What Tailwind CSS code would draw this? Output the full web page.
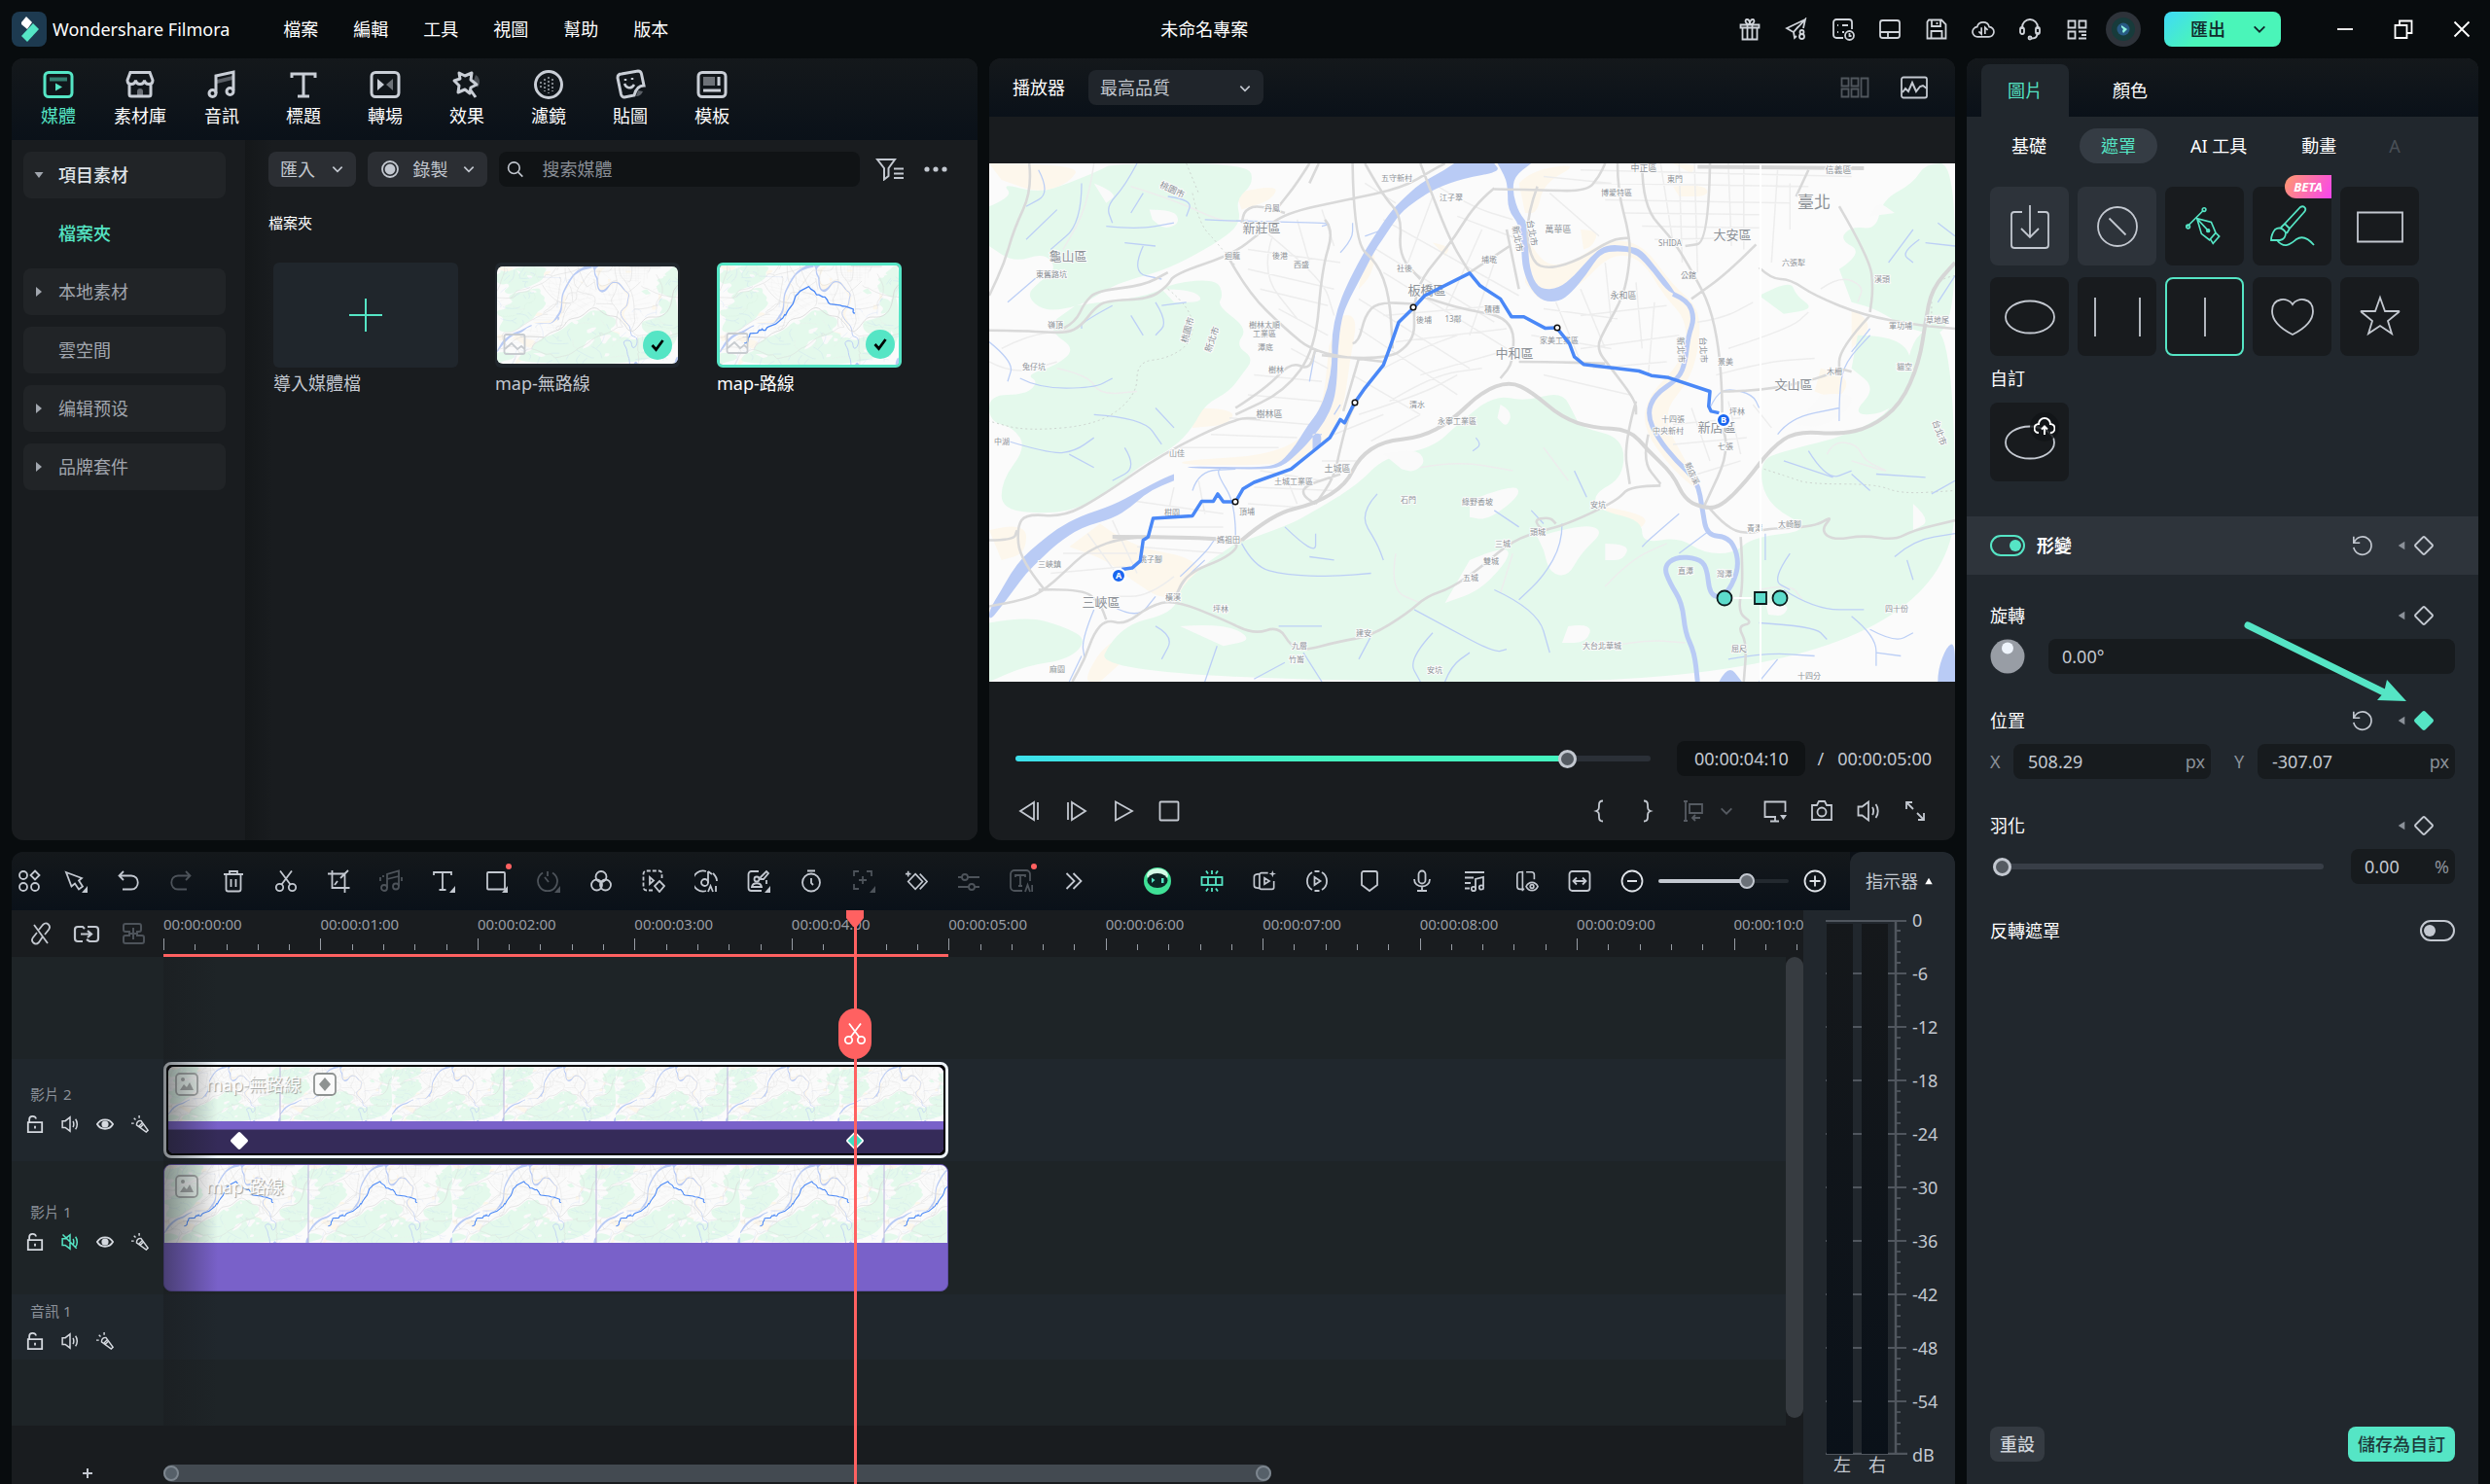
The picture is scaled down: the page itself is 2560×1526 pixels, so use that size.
<!DOCTYPE html>
<html lang="zh-Hant">
<head>
    <meta charset="UTF-8">
    <meta name="viewport" content="width=device-width, initial-scale=1.0">
    <title>Wondershare Filmora</title>
    <script src="https://cdn.jsdelivr.net/npm/@tailwindcss/browser@4"></script>
</head>
<body class="flex h-screen flex-col overflow-hidden bg-[#080c0e] fill-none stroke-current stroke-[1.8] font-['Noto_Sans','Noto_Sans_CJK_TC',sans-serif] text-lg/6 text-[#c3c8d0]">

    <!-- Icon sprite -->
    <svg class="absolute size-0" aria-hidden="true">
        <symbol id="gift" viewBox="0 0 24 24"><path d="M2.500 7.500h19v3h-19zM4.500 10.500v12h15v-12M9.500 7.500v15M14.500 7.500v15M12 7c-5 0-5.500-5-3-5s3 3 3 5c0-2 .5-5 3-5s2 5-3 5"/></symbol>
        <symbol id="send" viewBox="0 0 24 24"><path d="M12 19l-2 2-1-6L21 2l-2 9M21 2L2 11l5 3 2 1M9 15l5-6"/><circle cx="17.500" cy="15" r="2"/><circle cx="17.500" cy="19.500" r="2.500"/></symbol>
        <symbol id="tasks" viewBox="0 0 24 24"><path d="M12 21H5a3 3 0 0 1-3-3V5a3 3 0 0 1 3-3h13a3 3 0 0 1 3 3v7M6 8h1M6 15h1M11 8h6M11 15h2"/><circle cx="18.500" cy="18.500" r="4.500"/><path d="M18.500 16v3h2"/></symbol>
        <symbol id="layout" viewBox="0 0 24 24"><rect x="2" y="3" width="20" height="18" rx="2.500"/><path d="M2 15h20M10 15v6"/></symbol>
        <symbol id="save" viewBox="0 0 24 24"><path d="M4 2.500h13L21.500 7v14.500h-19v-17zM7 3v6h9V3M12.500 5v2M6.500 21.500V14h11v7.500"/></symbol>
        <symbol id="cloud" viewBox="0 0 26 24"><path d="M7 20.500a5.500 5.500 0 0 1-.8-11 7 7 0 0 1 13.500 0 5.500 5.500 0 0 1-.7 11zM11 10v7.500L8 14.500M15 17.500V10l3 3"/></symbol>
        <symbol id="headset" viewBox="0 0 24 24"><path d="M4 12V10a8 8 0 0 1 16 0v2M20 15c0 5-3 6.500-6 6.500"/><rect x="2" y="10" width="4" height="7" rx="2"/><rect x="18" y="10" width="4" height="7" rx="2"/><circle cx="12" cy="21" r="1.500"/></symbol>
        <symbol id="qr" viewBox="0 0 24 24"><path d="M3.500 3.500h7v7h-7zM14.500 3.500h7v7h-7zM3.500 14.500h7v7h-7zM14 14.500h8M17 18h5M14 21.500h8"/></symbol>
        <symbol id="minus" viewBox="0 0 24 24"><path d="M4 12h16"/></symbol>
        <symbol id="restore" viewBox="0 0 24 24"><path d="M3.500 8h12v13h-12zM8 8V3.500h12.500V16h-5"/></symbol>
        <symbol id="close" viewBox="0 0 24 24"><path d="M4.500 4.500l15 15M19.500 4.500l-15 15"/></symbol>
        <symbol id="chev" viewBox="0 0 12 12"><path d="M2 4l4 4 4-4" stroke-width="1.400"/></symbol>
        <symbol id="tri-l" viewBox="0 0 12 12"><path d="M10 1v10L2 6z" fill="currentColor" stroke="none"/></symbol>
        <symbol id="tri-r" viewBox="0 0 12 12"><path d="M3 1v10l6-5z" fill="currentColor" stroke="none"/></symbol>
        <symbol id="tri-d" viewBox="0 0 12 12"><path d="M1.500 3h9L6 9z" fill="currentColor" stroke="none"/></symbol>
        <symbol id="tri-u" viewBox="0 0 12 12"><path d="M1.500 10h9L6 2z" fill="currentColor" stroke="none"/></symbol>

        <!-- Library tabs -->
        <symbol id="n-media" viewBox="0 0 32 32"><rect x="2" y="3.500" width="28" height="25" rx="4"/><path d="M7 8.500h18v4H7z" fill="currentColor" fill-opacity=".5" stroke="none"/><path d="M13 14.500v8l7-4z" fill="currentColor" stroke="none"/></symbol>
        <symbol id="n-stock" viewBox="0 0 32 32"><path d="M5 15v11a2 2 0 0 0 2 2h18a2 2 0 0 0 2-2V15M6 3.500h20l3 8c0 3-2 4-4 4s-4-1-4.500-4c-.5 3-2.500 4-4.500 4s-4-1-4.500-4c-.5 3-2.500 4-4.500 4s-4-1-4-4z"/><path d="M13 27v-4a3 3 0 0 1 6 0v4z" fill="currentColor" fill-opacity=".5" stroke="none"/></symbol>
        <symbol id="n-audio" viewBox="0 0 32 32"><path d="M10 25V7l18-4v19"/><path d="M11 11l16-4v4l-16 4z" fill="currentColor" fill-opacity=".4" stroke="none"/><circle cx="6.500" cy="25" r="3.500"/><circle cx="24.500" cy="23" r="3.500"/></symbol>
        <symbol id="n-title" viewBox="0 0 32 32"><path d="M4 9V5h24v4M16 5v23M10 28h12"/></symbol>
        <symbol id="n-trans" viewBox="0 0 32 32"><rect x="2" y="3.500" width="28" height="25" rx="4"/><path d="M8 10v12l7-6z" fill="currentColor" stroke="none"/><path d="M24 10v12l-7-6z" fill="currentColor" fill-opacity=".5" stroke="none"/></symbol>
        <symbol id="n-fx" viewBox="0 0 32 32"><path d="M25 6c5 3 5 9 2 13l-4-7z" fill="currentColor" fill-opacity=".3" stroke="none"/><path d="M8 4l6 3 7-3-1 7 6 5-6 3-1 6-5-4-7 3 1-7-5-5 6-2zM20 22l5 7" stroke-linejoin="round"/></symbol>
        <symbol id="n-filter" viewBox="0 0 32 32"><circle cx="16" cy="16" r="13.500"/><path d="M16 8v17M12 10v13M20 10v13M8 13v6" stroke-width="2" stroke-dasharray="2 2" stroke-opacity=".6"/></symbol>
        <symbol id="n-sticker" viewBox="0 0 32 32"><path d="M24 22l5 1c-1 3-4 5-7 5z" fill="currentColor" fill-opacity=".4" stroke="none"/><path d="M7 5l17-3c2 0 3 1 3.500 3L30 17c-4 0-8 2-10 10l-10 2c-2 0-3-1-3.500-3L3 9c0-2 1-4 4-4z"/><path d="M10 15c2 5 7 6 10 1M11 10v2M18 9v2" stroke-width="2.500"/></symbol>
        <symbol id="n-tpl" viewBox="0 0 32 32"><rect x="2" y="3.500" width="28" height="25" rx="4"/><path d="M7 8h12v9H7z" fill="currentColor" fill-opacity=".5" stroke="none"/><path d="M23 8v9M7 22h18"/></symbol>

        <symbol id="search" viewBox="0 0 24 24"><circle cx="10.500" cy="10.500" r="6.500"/><path d="M15.500 15.500l5 5"/></symbol>
        <symbol id="filter" viewBox="0 0 30 24"><path d="M2 2h18l-6.500 9v8L9 22.500V11zM19 11.500h10M19 16.500h10M19 21h10" stroke-width="2"/></symbol>
        <symbol id="pic" viewBox="0 0 24 24"><rect x="1.500" y="2" width="21" height="20" rx="2"/><path d="M2 17l7-6 6 6 4-3 3.500 3"/></symbol>
        <symbol id="check" viewBox="0 0 16 16"><path d="M2.500 8l4 4.500 7-9.500" stroke-width="2.800"/></symbol>
        <symbol id="views" viewBox="0 0 30 24"><path d="M1.500 2.500h7v8h-7zM11.500 2.500h7v8h-7zM1.500 13.500h7v8h-7zM11.500 13.500h7v8h-7zM21.500 2.500h7v19h-7z"/></symbol>
        <symbol id="scope" viewBox="0 0 28 24"><rect x="1" y="1.500" width="26" height="21" rx="2"/><path d="M2 17l3-4 3 3 4-9 4 9 4-5 3-1 4 3" stroke-width="2"/></symbol>

        <!-- Transport -->
        <symbol id="prev" viewBox="0 0 24 24"><path d="M17 3L3 12l14 9zM21 3v18"/></symbol>
        <symbol id="next" viewBox="0 0 24 24"><path d="M8 3l14 9-14 9zM4 3v18"/></symbol>
        <symbol id="play" viewBox="0 0 24 24"><path d="M5 2.500l17 9.500-17 9.500z"/></symbol>
        <symbol id="stop" viewBox="0 0 24 24"><rect x="2.500" y="2.500" width="19" height="19" rx="1"/></symbol>
        <symbol id="brace-l" viewBox="0 0 24 24"><path d="M15 1.500c-3 0-4 1-4 4 0 4 0 5.500-3 6.500 3 1 3 2.500 3 6.500 0 3 1 4 4 4"/></symbol>
        <symbol id="brace-r" viewBox="0 0 24 24"><path d="M9 1.500c3 0 4 1 4 4 0 4 0 5.500 3 6.500-3 1-3 2.500-3 6.500 0 3-1 4-4 4"/></symbol>
        <symbol id="markin" viewBox="0 0 24 24"><path d="M2 2h4M2 22h4M4 2v20M8 5h13v9H8zM19 19h-8M14 16l-3 3 3 3"/></symbol>
        <symbol id="monitor" viewBox="0 0 24 24"><path d="M13 18H1.500V2.500h21V13M12 18v4M7 22.500h9"/><path d="M17 16h7l-3.500 5z" fill="currentColor" stroke="none"/></symbol>
        <symbol id="camera" viewBox="0 0 24 24"><path d="M2 6h5l2-4h6l2 4h5v15H2z"/><circle cx="12" cy="13" r="4.500"/></symbol>
        <symbol id="speaker" viewBox="0 0 24 24"><path d="M1.500 7.500h4L12 2.500v19l-6.500-5h-4zM16 8c1.500 2 1.500 6 0 8M19.500 5c3 4 3 10 0 14"/></symbol>
        <symbol id="mute" viewBox="0 0 24 24"><path d="M1.500 7.500h4L12 2.500v19l-6.500-5h-4zM16 8c1.500 2 1.500 6 0 8M19.500 5c3 4 3 10 0 14M2 2l19 19"/></symbol>
        <symbol id="expand" viewBox="0 0 24 24"><path d="M3 10V3h6M3 3l7 7M21 14v7h-6M21 21l-7-7"/></symbol>

        <!-- Timeline tools -->
        <symbol id="t-apps" viewBox="0 0 24 24"><circle cx="6" cy="6" r="4"/><path d="M18 1.500L22.500 6 18 10.500 13.500 6z"/><circle cx="6" cy="18" r="4"/><circle cx="18" cy="18" r="4"/></symbol>
        <symbol id="t-cursor" viewBox="0 0 24 24"><path d="M2 3l16 6-3 2.500 4 6-4 3-4-6-3.500 3z"/><path d="M24 17v7h-6z" fill="currentColor" stroke="none"/></symbol>
        <symbol id="t-undo" viewBox="0 0 24 24"><path d="M7 2L2.500 6.500 7 11M3 6.500h12c9 0 9 14 0 14H6"/></symbol>
        <symbol id="t-redo" viewBox="0 0 24 24"><path d="M17 2l4.500 4.500L17 11M21 6.500H9c-9 0-9 14 0 14h9"/></symbol>
        <symbol id="t-trash" viewBox="0 0 24 24"><path d="M2 5h20M8 5V2h8v3M4.500 5v15.500a2 2 0 0 0 2 2h11a2 2 0 0 0 2-2V5M9.500 10v8M14.500 10v8"/></symbol>
        <symbol id="t-cut" viewBox="0 0 24 24"><circle cx="5.500" cy="18.500" r="3.700"/><circle cx="18.500" cy="18.500" r="3.700"/><path d="M6 1.500l10.500 14M18 1.500l-10.500 14"/></symbol>
        <symbol id="t-crop" viewBox="0 0 24 24"><path d="M5.500 1v18h18M1 4.500h17.500V24M22 1l-8 8M11 12l-3 4"/></symbol>
        <symbol id="t-music" viewBox="0 0 24 24"><path d="M8 19V5l12-3.500V17M8 10l12-3M1 8v4M23 8v4M4 6v2"/><circle cx="5" cy="19" r="3"/><circle cx="17" cy="17.500" r="3"/></symbol>
        <symbol id="t-text" viewBox="0 0 24 24"><path d="M2 6V3h18v3M11 3v18M7.500 21h7"/><path d="M24 17v7h-6z" fill="currentColor" stroke="none"/></symbol>
        <symbol id="t-rect" viewBox="0 0 24 24"><rect x="3" y="3" width="18" height="17.500" rx="1"/><path d="M24 17v7h-6z" fill="currentColor" stroke="none"/></symbol>
        <symbol id="t-speed" viewBox="0 0 24 24"><path d="M11 2v5M6 3.500a10 10 0 1 0 10 0M8 8l4 5"/><path d="M24 17v7h-6z" fill="currentColor" stroke="none"/></symbol>
        <symbol id="t-color" viewBox="0 0 24 24"><circle cx="12" cy="7.500" r="5.500"/><circle cx="7.500" cy="16" r="5.500"/><circle cx="16.500" cy="16" r="5.500"/></symbol>
        <symbol id="t-mask" viewBox="0 0 24 24"><path d="M11 21.500H4.500a3 3 0 0 1-3-3v-14a3 3 0 0 1 3-3h13a3 3 0 0 1 3 3V9" stroke-dasharray="4 2"/><path d="M8 8v7l4-3.500zM18 12l5 5-5 6-5-6z"/></symbol>
        <symbol id="t-aiaudio" viewBox="0 0 24 24"><path d="M12 22A10.500 10.500 0 1 1 12 2M14 2v12M14 2l4 3M19 4c3 3 4 5 4 8"/><circle cx="10.500" cy="13.500" r="3.500"/><path d="M14 23l2.500-6 2.500 6M22 17v6"/></symbol>
        <symbol id="t-portrait" viewBox="0 0 24 24"><path d="M12 2H4.500a3 3 0 0 0-3 3v14a3 3 0 0 0 3 3H15M20 11v4M14 8l6-6 2 2-5 6h-3z"/><circle cx="10" cy="10" r="2.500"/><path d="M5 18c1-5 9-5 10 0z"/><path d="M24 17v7h-6z" fill="currentColor" stroke="none"/></symbol>
        <symbol id="t-timer" viewBox="0 0 24 24"><circle cx="12" cy="13.500" r="9"/><path d="M8 1.500h8M12 9v5l2 2"/></symbol>
        <symbol id="t-track" viewBox="0 0 24 24"><path d="M2 7V2h5M15 2h5v5M2 15v5h5M11 7v8M7 11h8"/><path d="M24 17v7h-6z" fill="currentColor" stroke="none"/></symbol>
        <symbol id="t-key" viewBox="0 0 26 24"><path d="M12 4l8 8.500-8 8.500-8-8.500zM17 4l8 8.500-8 8.500M4 1v6M1 4h6"/></symbol>
        <symbol id="t-adjust" viewBox="0 0 24 24"><path d="M1 8h4M11 8h12M1 18h11M18 18h5"/><circle cx="8" cy="8" r="3"/><circle cx="15" cy="18" r="3"/></symbol>
        <symbol id="t-textai" viewBox="0 0 24 24"><path d="M13 22H5a4 4 0 0 1-4-4V5a4 4 0 0 1 4-4h12a4 4 0 0 1 4 4v7M6 8V6h10v2M11 6v11M9 17h4M16 23l2.500-7 2.500 7M23.200 16v7"/></symbol>
        <symbol id="t-more" viewBox="0 0 24 24"><path d="M4.500 4l8 8-8 8M11.500 4l8 8-8 8"/></symbol>
        <symbol id="t-magnet" viewBox="0 0 24 24"><rect x="1.500" y="8" width="21" height="8"/><path d="M8 8v8M16 8v8M12 1v4M12 19v4M6 1.500l2 3M18 1.500l-2 3M6 22.500l2-3M18 22.500l-2-3"/></symbol>
        <symbol id="t-autocut" viewBox="0 0 26 24"><path d="M17 3H9.500a2 2 0 0 0-2 2v14a2 2 0 0 0 2 2h12a2 2 0 0 0 2-2v-7M7 4l-3 .5a3 3 0 0 0-2.500 3v9a3 3 0 0 0 2.500 3l3 .5M13 8.500v7l5.500-3.500z"/><path d="M22 0l1 3 3 1-3 1-1 3-1-3-3-1 3-1z" fill="currentColor" stroke="none"/></symbol>
        <symbol id="t-render" viewBox="0 0 24 24"><path d="M7 3a10.500 10.500 0 0 0 0 18M17 3a10.500 10.500 0 0 1 0 18M9.500 2h5M9.500 22h5M9.500 8v8l6-4z"/></symbol>
        <symbol id="t-shield" viewBox="0 0 24 24"><path d="M4 4a2 2 0 0 1 2-2h12a2 2 0 0 1 2 2v12l-8 6-8-6z"/></symbol>
        <symbol id="t-mic" viewBox="0 0 24 24"><rect x="8.500" y="1.500" width="7" height="13" rx="3.500"/><path d="M4 10c0 10 16 10 16 0M12 18v4M7 22h10"/></symbol>
        <symbol id="t-list" viewBox="0 0 24 24"><path d="M2 3h20M2 8.500h9M2 14h6M2 19.500h5M13 20V10l8-2v9.500"/><circle cx="11" cy="20" r="2.200"/><circle cx="19" cy="18.500" r="2.200"/></symbol>
        <symbol id="t-eye" viewBox="0 0 26 24"><path d="M8 2H5a3 3 0 0 0-3 3v13a3 3 0 0 0 3 3h5M8 1v22M12 2h6a3 3 0 0 1 3 3v5M12 18c3-6 10-6 13 0-3 6-10 6-13 0z"/><circle cx="18.500" cy="18" r="2"/></symbol>
        <symbol id="t-fit" viewBox="0 0 24 24"><rect x="1.500" y="2" width="21" height="20" rx="3"/><path d="M5.500 12h13M9 8.500L5.500 12 9 15.500M15 8.500l3.500 3.500-3.500 3.500"/></symbol>
        <symbol id="t-out" viewBox="0 0 24 24"><circle cx="12" cy="12" r="10.500"/><path d="M7 12h10"/></symbol>
        <symbol id="t-in" viewBox="0 0 24 24"><circle cx="12" cy="12" r="10.500"/><path d="M6.500 12h11M12 6.500v11"/></symbol>
        <symbol id="t-unlink" viewBox="0 0 24 24"><path d="M10 8l4-5c4-4 9 1 6 5l-4 5M14 15l-4 6c-4 4-9-1-6-5l4-5M5 3l14 19"/></symbol>
        <symbol id="t-link" viewBox="0 0 30 24"><path d="M11 20H6a3 3 0 0 1-3-3V8a3 3 0 0 1 3-3h5l2 2M16 5h8a3 3 0 0 1 3 3v9a3 3 0 0 1-3 3h-6l-3-2M9 12.500h11M16 9l4 3.500-4 3.500" stroke-width="2.200"/></symbol>
        <symbol id="t-group" viewBox="0 0 26 24"><path d="M10 10H5a2 2 0 0 1-2-2V4a2 2 0 0 1 2-2h14a2 2 0 0 1 2 2v4a2 2 0 0 1-2 2h-3M10 14H5a2 2 0 0 0-2 2v4a2 2 0 0 0 2 2h17a2 2 0 0 0 2-2v-4a2 2 0 0 0-2-2h-6M13 6v12M8 12h10" stroke-width="2"/></symbol>
        <symbol id="lock" viewBox="0 0 20 20"><path d="M2 8h16v11H2zM3.500 8V4.500C3.500 0 11 0 11 4M10 12v3"/></symbol>
        <symbol id="eye" viewBox="0 0 20 20"><path d="M1 10c4-7 14-7 18 0-4 7-14 7-18 0z"/><circle cx="10" cy="10" r="3" fill="currentColor"/></symbol>
        <symbol id="wand" viewBox="0 0 20 20"><path d="M6 11c0-3 2-5 5-5l8 11-2 2zM8 13l5-5M10 14l4-4M0 9h3M3 3l2 2M9 0v3" stroke-width="1.600"/></symbol>

        <!-- Inspector -->
        <symbol id="reset" viewBox="0 0 24 24"><path d="M2 2v7h7M2.500 8.500A10 10 0 1 1 2 14"/></symbol>
        <symbol id="dia" viewBox="0 0 20 20"><path d="M9 1.500q1-1 2 0l7.500 7.500q1 1 0 2L11 18.500q-1 1-2 0L1.500 11q-1-1 0-2z"/></symbol>
        <symbol id="m-import" viewBox="0 0 48 48"><path d="M16 9h-8a3 3 0 0 0-3 3v31a3 3 0 0 0 3 3h32a3 3 0 0 0 3-3V12a3 3 0 0 0-3-3h-8M24 2v32M15 26l9 9 9-9"/></symbol>
        <symbol id="m-none" viewBox="0 0 48 48"><circle cx="24" cy="24" r="20"/><path d="M15.500 15.500l17 17"/></symbol>
        <symbol id="m-pen" viewBox="0 0 48 48"><path d="M15 15l5 17 9 7 7-8-5-12zM15 15l12 13M4 24L22 6M30 38l3 5 7-8-4-4z"/><circle cx="27.500" cy="28.500" r="1.500" fill="currentColor"/><circle cx="5" cy="24" r="2"/><circle cx="23" cy="5" r="2"/></symbol>
        <symbol id="m-brush" viewBox="0 0 48 48"><path d="M2 38q0-6 4-11 6-4 11 3 0 7-6 8zM12 25l4-4 5 5-3 5M16 21L32 4q3-2 5 1 1 2-1 4L21 26M8 38c8 10 15 3 20-1 6-4 12-1 18 6"/></symbol>
        <symbol id="m-rect" viewBox="0 0 48 48"><path d="M1 9.500h46v30H1z"/></symbol>
        <symbol id="m-oval" viewBox="0 0 52 48"><ellipse cx="26" cy="24" rx="25" ry="16.500"/></symbol>
        <symbol id="m-two" viewBox="0 0 48 48"><path d="M1 4v40M47 4v40"/></symbol>
        <symbol id="m-one" viewBox="0 0 48 48"><path d="M24 4v40"/></symbol>
        <symbol id="m-heart" viewBox="0 0 48 48"><path d="M24 42C12 36 3 29 3 18 3 4 19 3 24 11 29 3 45 4 45 18c0 11-9 18-21 24z"/></symbol>
        <symbol id="m-star" viewBox="0 0 48 48"><path d="M24 4l5 14h14q1 0 0 1L32 28l4 13-12-8-12 8 4-13L5 19q-1-1 0-1h14z"/></symbol>

        <!-- Map artwork, filled by the script; shared by the preview, the media cards and the clips -->
        <symbol id="map" viewBox="0 0 993 533" preserveAspectRatio="none"></symbol>
        <symbol id="route" viewBox="0 0 993 533" preserveAspectRatio="none"></symbol>
        <symbol id="route-small" viewBox="0 0 993 533" preserveAspectRatio="none"></symbol>
    </svg>

    <!-- Title bar -->
    <header class="flex h-15 shrink-0 items-center pr-[17px] pl-3 text-white">
        <svg class="size-9" viewBox="0 0 36 36" stroke="none"><rect width="36" height="36" rx="8" fill="#1d3a50"/><path d="M10 11l5-6 6 6-5 7-6-5z" fill="#fff"/><path d="M22 12l6 6-12 13-6-6z" fill="#55e5c5"/></svg>
        <h1 class="ml-1.5">Wondershare Filmora</h1>
        <nav class="ml-[55px] flex gap-9">
            <a href="#">檔案</a><a href="#">編輯</a><a href="#">工具</a><a href="#">視圖</a><a href="#">幫助</a><a href="#">版本</a>
        </nav>
        <p class="ml-[506px]">未命名專案</p>
        <div class="ml-auto flex items-center gap-6 text-[#d0d4da]">
            <button aria-label="禮物"><svg class="size-6"><use href="#gift"/></svg></button>
            <button aria-label="分享"><svg class="size-6"><use href="#send"/></svg></button>
            <button aria-label="任務"><svg class="size-6"><use href="#tasks"/></svg></button>
            <button aria-label="版面"><svg class="size-6"><use href="#layout"/></svg></button>
            <button aria-label="儲存"><svg class="size-6"><use href="#save"/></svg></button>
            <button aria-label="雲端"><svg class="size-6"><use href="#cloud"/></svg></button>
            <button aria-label="支援"><svg class="size-6"><use href="#headset"/></svg></button>
            <button aria-label="應用程式"><svg class="size-6"><use href="#qr"/></svg></button>
        </div>
        <button aria-label="帳號" class="ml-[18px] flex size-9 items-center justify-center rounded-full bg-[#2e333a]">
            <svg class="size-6" viewBox="0 0 24 24" stroke="none"><circle cx="12" cy="12" r="12" fill="#173b3b"/><circle cx="12" cy="12" r="6.500" fill="#285a84"/><path d="M10 8l3 2 3 2-4 4-1-2 1-2-2-2z" fill="#8ff5e0"/></svg>
        </button>
        <button class="ml-6 flex h-9 w-[120px] items-center rounded-lg bg-linear-[135deg,#3fd9f8,#4af5b9_40%] pl-[27px] font-medium text-[#10272a]">匯出<svg class="ml-auto mr-3.5 size-4"><use href="#chev"/></svg></button>
        <div class="ml-[54px] flex gap-9">
            <button aria-label="最小化"><svg class="size-6"><use href="#minus"/></svg></button>
            <button aria-label="還原"><svg class="size-6"><use href="#restore"/></svg></button>
            <button aria-label="關閉"><svg class="size-6"><use href="#close"/></svg></button>
        </div>
    </header>

    <main class="flex min-h-0 flex-1 gap-3 px-3">
        <div class="flex min-w-0 flex-1 flex-col gap-3">
            <div class="grid grid-cols-2 gap-3">

                <!-- Media library -->
                <section class="flex flex-col overflow-hidden rounded-xl bg-[#191c1f]">
                    <nav class="flex h-21 bg-linear-to-b from-[#14181b] to-[#0a1119] pl-1.5 text-white">
                        <button class="flex w-21 flex-col items-center gap-1 pt-[11px] text-[#55e5c5]"><svg class="size-8 stroke-3"><use href="#n-media"/></svg>媒體</button>
                        <button class="flex w-21 flex-col items-center gap-1 pt-[11px]"><svg class="size-8 stroke-3 text-[#c9ced6]"><use href="#n-stock"/></svg>素材庫</button>
                        <button class="flex w-21 flex-col items-center gap-1 pt-[11px]"><svg class="size-8 stroke-3 text-[#c9ced6]"><use href="#n-audio"/></svg>音訊</button>
                        <button class="flex w-21 flex-col items-center gap-1 pt-[11px]"><svg class="size-8 stroke-3 text-[#c9ced6]"><use href="#n-title"/></svg>標題</button>
                        <button class="flex w-21 flex-col items-center gap-1 pt-[11px]"><svg class="size-8 stroke-3 text-[#c9ced6]"><use href="#n-trans"/></svg>轉場</button>
                        <button class="flex w-21 flex-col items-center gap-1 pt-[11px]"><svg class="size-8 stroke-3 text-[#c9ced6]"><use href="#n-fx"/></svg>效果</button>
                        <button class="flex w-21 flex-col items-center gap-1 pt-[11px]"><svg class="size-8 stroke-3 text-[#c9ced6]"><use href="#n-filter"/></svg>濾鏡</button>
                        <button class="flex w-21 flex-col items-center gap-1 pt-[11px]"><svg class="size-8 stroke-3 text-[#c9ced6]"><use href="#n-sticker"/></svg>貼圖</button>
                        <button class="flex w-21 flex-col items-center gap-1 pt-[11px]"><svg class="size-8 stroke-3 text-[#c9ced6]"><use href="#n-tpl"/></svg>模板</button>
                    </nav>
                    <div class="flex flex-1">
                        <aside class="flex w-60 flex-col gap-3 py-3 pr-5 pl-3 text-[#a1a6ae]">
                            <button class="flex h-12 items-center gap-3.5 rounded-lg bg-[#212427] pl-2.5 font-medium text-[#dfe3e8]"><svg class="size-3 text-[#a1a6ae]"><use href="#tri-d"/></svg>項目素材</button>
                            <button class="flex h-12 items-center pl-9 font-medium text-[#55e5c5]">檔案夾</button>
                            <button class="flex h-12 items-center gap-3.5 rounded-lg bg-[#212427] pl-2.5"><svg class="size-3"><use href="#tri-r"/></svg>本地素材</button>
                            <button class="flex h-12 items-center rounded-lg bg-[#212427] pl-9">雲空間</button>
                            <button class="flex h-12 items-center gap-3.5 rounded-lg bg-[#212427] pl-2.5"><svg class="size-3"><use href="#tri-r"/></svg>编辑预设</button>
                            <button class="flex h-12 items-center gap-3.5 rounded-lg bg-[#212427] pl-2.5"><svg class="size-3"><use href="#tri-r"/></svg>品牌套件</button>
                        </aside>
                        <div class="flex-1 bg-linear-[90deg,#141719,#191c1f_28px] pt-3 pr-[31px] pl-6">
                            <div class="flex items-center gap-3">
                                <button class="flex h-9 w-[90px] items-center justify-between rounded-lg bg-[#2b2e33] px-3">匯入<svg class="size-3.5"><use href="#chev"/></svg></button>
                                <button class="flex h-9 w-[123px] items-center justify-between rounded-lg bg-[#2b2e33] pr-3 pl-3.5"><svg class="size-4.5" viewBox="0 0 18 18"><circle cx="9" cy="9" r="8"/><circle cx="9" cy="9" r="4.500" fill="currentColor"/></svg>錄製<svg class="size-3.5"><use href="#chev"/></svg></button>
                                <label class="flex h-9 flex-1 items-center gap-[17px] rounded-lg bg-[#101315] px-1.5">
                                    <svg class="size-6"><use href="#search"/></svg>
                                    <input type="search" placeholder="搜索媒體" class="w-full bg-transparent outline-none placeholder:text-[#898e95]">
                                </label>
                                <button aria-label="篩選" class="ml-1"><svg class="h-6 w-[30px]"><use href="#filter"/></svg></button>
                                <button aria-label="更多" class="ml-2"><svg class="size-6" viewBox="0 0 24 24" fill="currentColor" stroke="none"><circle cx="3" cy="12" r="2.600"/><circle cx="12" cy="12" r="2.600"/><circle cx="21" cy="12" r="2.600"/></svg></button>
                            </div>
                            <h2 class="mt-[25px] text-[15px] text-white">檔案夾</h2>
                            <div class="mt-[29px] flex gap-[38px] pl-[5px]">
                                <button class="w-[190px] text-left">
                                    <span class="flex h-[108px] items-center justify-center rounded-md bg-[#20262c]"><svg class="size-9 text-[#55e5c5]" viewBox="0 0 36 36"><path d="M18 1v34M1 18h34" stroke-width="2"/></svg></span>
                                    <span class="mt-1 block">導入媒體檔</span>
                                </button>
                                <figure class="w-[190px]">
                                    <div class="relative h-[108px] overflow-hidden rounded-md bg-[#20262c] px-0.5 py-1">
                                        <svg class="size-full rounded-md"><use href="#map" width="100%" height="100%"/></svg>
                                        <svg class="absolute bottom-3 left-2 size-6 text-[#c8ccd0]"><use href="#pic"/></svg>
                                        <span class="absolute right-2 bottom-2 flex size-[30px] items-center justify-center rounded-full bg-[#55e5c5] text-black"><svg class="size-4"><use href="#check"/></svg></span>
                                    </div>
                                    <figcaption class="mt-1">map-無路線</figcaption>
                                </figure>
                                <figure class="w-[190px] text-white">
                                    <div class="relative h-[108px] overflow-hidden rounded-md border-3 border-[#55e5c5]">
                                        <svg class="size-full"><use href="#map" width="100%" height="100%"/><use href="#route-small" width="100%" height="100%"/></svg>
                                        <svg class="absolute bottom-2.5 left-1.5 size-6 text-[#c8ccd0]"><use href="#pic"/></svg>
                                        <span class="absolute right-1 bottom-1.5 flex size-[30px] items-center justify-center rounded-full bg-[#55e5c5] text-black"><svg class="size-4"><use href="#check"/></svg></span>
                                    </div>
                                    <figcaption class="mt-1">map-路線</figcaption>
                                </figure>
                            </div>
                        </div>
                    </div>
                </section>

                <!-- Player -->
                <section class="overflow-hidden rounded-xl bg-[#191c1f]">
                    <div class="flex h-15 items-center bg-linear-to-b from-[#14181b] to-[#0a1119] pr-7 pl-6">
                        <label for="quality" class="text-white">播放器</label>
                        <div class="relative ml-6">
                            <select id="quality" class="h-9 w-[180px] appearance-none rounded-lg bg-[#20252b] px-3 outline-none"><option>最高品質</option></select>
                            <svg class="pointer-events-none absolute top-3 right-3 size-3.5"><use href="#chev"/></svg>
                        </div>
                        <button aria-label="多視圖" class="ml-auto text-[#50565d]"><svg class="h-6 w-[30px]"><use href="#views"/></svg></button>
                        <button aria-label="示波器" class="ml-8"><svg class="h-6 w-7"><use href="#scope"/></svg></button>
                    </div>
                    <div class="pt-12">
                        <svg id="preview" class="block aspect-[993/533] w-full" viewBox="0 0 993 533" preserveAspectRatio="none">
                            <use href="#map" width="993" height="533"/>
                            <g id="places" fill="#8d9298" stroke="#fbfbfb" stroke-width="2" paint-order="stroke" text-anchor="middle"></g>
                            <use href="#route" width="993" height="533"/>
                            <g fill="#fff" stroke="#111" stroke-width="1.500"><circle cx="436" cy="148" r="2.800"/><circle cx="584" cy="169" r="2.800"/><circle cx="376" cy="246" r="2.800"/><circle cx="253" cy="348" r="2.800"/></g>
                            <g fill="#1a66f0" stroke="#fff" stroke-width="2"><circle cx="133" cy="424" r="7"/><circle cx="755" cy="264" r="7"/></g>
                            <g fill="#fff" stroke="none" font-size="9" font-weight="700" text-anchor="middle"><text x="133" y="427">A</text><text x="755" y="267">B</text></g>
                            <path d="M793 0v533M764 447h20" stroke="#fff" stroke-width="2"/>
                            <g fill="#5cdccb" stroke="#0d1b1c" stroke-width="1.800"><circle cx="756" cy="447" r="7.500"/><circle cx="813" cy="447" r="7.500"/><path d="M787 441h12v12h-12z"/></g>
                        </svg>
                    </div>
                    <div class="mt-[61px] flex h-9 items-center pr-6 pl-[27px]">
                        <input type="range" aria-label="播放進度" value="88" class="h-1.5 flex-1 appearance-none rounded-full bg-[linear-gradient(90deg,#3de0ec,#45f4bf_50%,#45f4bf_87%,#2b3037_87%)] [&::-webkit-slider-thumb]:size-[19px] [&::-webkit-slider-thumb]:appearance-none [&::-webkit-slider-thumb]:rounded-full [&::-webkit-slider-thumb]:border-3 [&::-webkit-slider-thumb]:border-[#c3c8d0] [&::-webkit-slider-thumb]:bg-[#555b62]">
                        <input aria-label="目前時間" value="00:00:04:10" class="ml-[27px] h-9 w-[132px] rounded-lg bg-[#101315] text-center outline-none">
                        <span class="ml-3">/</span><span class="ml-3.5">00:00:05:00</span>
                    </div>
                    <div class="mt-6 flex items-center gap-6 px-[29px] pb-[18px]">
                        <div class="flex gap-6">
                            <button aria-label="上一幀"><svg class="size-6"><use href="#prev"/></svg></button>
                            <button aria-label="下一幀"><svg class="size-6"><use href="#next"/></svg></button>
                            <button aria-label="播放"><svg class="size-6"><use href="#play"/></svg></button>
                            <button aria-label="停止"><svg class="size-6"><use href="#stop"/></svg></button>
                        </div>
                        <button aria-label="入點" class="ml-auto"><svg class="size-6"><use href="#brace-l"/></svg></button>
                        <button aria-label="出點"><svg class="size-6"><use href="#brace-r"/></svg></button>
                        <button aria-label="插入" class="flex w-[60px] items-center justify-between text-[#565b62]"><svg class="size-6"><use href="#markin"/></svg><svg class="mr-1.5 size-4"><use href="#chev"/></svg></button>
                        <button aria-label="顯示器"><svg class="size-6"><use href="#monitor"/></svg></button>
                        <button aria-label="快照"><svg class="size-6"><use href="#camera"/></svg></button>
                        <button aria-label="音量"><svg class="size-6"><use href="#speaker"/></svg></button>
                        <button aria-label="全螢幕"><svg class="size-6"><use href="#expand"/></svg></button>
                    </div>
                </section>
            </div>

            <!-- Timeline -->
            <section class="flex min-h-0 flex-1 flex-col overflow-hidden rounded-t-xl bg-[#0c1117]">
                <div class="flex h-15 shrink-0">
                    <div class="flex flex-1 items-center gap-[30px] bg-linear-to-b from-[#14181b] to-[#0a1119] pr-6 pl-1.5">
                        <div class="flex gap-6">
                            <button aria-label="工具集"><svg class="size-6"><use href="#t-apps"/></svg></button>
                            <button aria-label="選取"><svg class="size-6"><use href="#t-cursor"/></svg></button>
                        </div>
                        <button aria-label="復原"><svg class="size-6"><use href="#t-undo"/></svg></button>
                        <button aria-label="重做" class="text-[#4d535a]"><svg class="size-6"><use href="#t-redo"/></svg></button>
                        <button aria-label="刪除"><svg class="size-6"><use href="#t-trash"/></svg></button>
                        <button aria-label="分割"><svg class="size-6"><use href="#t-cut"/></svg></button>
                        <button aria-label="裁切"><svg class="size-6"><use href="#t-crop"/></svg></button>
                        <button aria-label="音樂" class="text-[#4d535a]"><svg class="size-6"><use href="#t-music"/></svg></button>
                        <button aria-label="文字"><svg class="size-6"><use href="#t-text"/></svg></button>
                        <button aria-label="遮罩" class="relative"><svg class="size-6"><use href="#t-rect"/></svg><span class="absolute -top-1.5 -right-1 size-1.5 rounded-full bg-[#ff6161]"></span></button>
                        <button aria-label="速度" class="text-[#4d535a]"><svg class="size-6"><use href="#t-speed"/></svg></button>
                        <button aria-label="色彩"><svg class="size-6"><use href="#t-color"/></svg></button>
                        <button aria-label="智慧摳像"><svg class="size-6"><use href="#t-mask"/></svg></button>
                        <button aria-label="AI 音訊"><svg class="size-6"><use href="#t-aiaudio"/></svg></button>
                        <button aria-label="AI 人像"><svg class="size-6"><use href="#t-portrait"/></svg></button>
                        <button aria-label="時長"><svg class="size-6"><use href="#t-timer"/></svg></button>
                        <button aria-label="追蹤" class="text-[#4d535a]"><svg class="size-6"><use href="#t-track"/></svg></button>
                        <button aria-label="關鍵幀"><svg class="size-6"><use href="#t-key"/></svg></button>
                        <button aria-label="調整" class="text-[#4d535a]"><svg class="size-6"><use href="#t-adjust"/></svg></button>
                        <button aria-label="AI 文字" class="relative text-[#4d535a]"><svg class="size-6"><use href="#t-textai"/></svg><span class="absolute -top-1.5 -right-1 size-1.5 rounded-full bg-[#ff6161]"></span></button>
                        <button aria-label="展開"><svg class="size-6"><use href="#t-more"/></svg></button>
                        <button aria-label="AI 助手" class="ml-auto"><svg class="size-7" viewBox="0 0 28 28" stroke="none"><circle cx="14" cy="14" r="14" fill="#3fe096"/><ellipse cx="14" cy="8" rx="11" ry="7" fill="#d3fbe6"/><ellipse cx="14" cy="13.500" rx="10.500" ry="7.500" fill="#0c2524"/><path d="M8 10.500l3.500 2.500L8 16zM18 11h2.500v5H18z" fill="#55e5c5"/></svg></button>
                        <button aria-label="磁吸" class="text-[#55e5c5]"><svg class="size-6"><use href="#t-magnet"/></svg></button>
                        <button aria-label="自動剪輯"><svg class="size-6"><use href="#t-autocut"/></svg></button>
                        <button aria-label="渲染"><svg class="size-6"><use href="#t-render"/></svg></button>
                        <button aria-label="標記"><svg class="size-6"><use href="#t-shield"/></svg></button>
                        <button aria-label="錄音"><svg class="size-6"><use href="#t-mic"/></svg></button>
                        <button aria-label="音訊混音"><svg class="size-6"><use href="#t-list"/></svg></button>
                        <button aria-label="軌道檢視"><svg class="size-6"><use href="#t-eye"/></svg></button>
                        <button aria-label="符合視窗"><svg class="size-6"><use href="#t-fit"/></svg></button>
                        <div class="flex items-center gap-[15px] text-[#dfe3e8]">
                            <button aria-label="縮小"><svg class="size-6"><use href="#t-out"/></svg></button>
                            <input type="range" aria-label="縮放" value="70" class="h-1 w-[134px] appearance-none rounded-full bg-[linear-gradient(90deg,#c3c8d0_70%,#23292f_70%)] [&::-webkit-slider-thumb]:size-4 [&::-webkit-slider-thumb]:appearance-none [&::-webkit-slider-thumb]:rounded-full [&::-webkit-slider-thumb]:border-2 [&::-webkit-slider-thumb]:border-[#c3c8d0] [&::-webkit-slider-thumb]:bg-[#6a7077]">
                            <button aria-label="放大"><svg class="size-6"><use href="#t-in"/></svg></button>
                        </div>
                    </div>
                    <button class="flex w-[108px] items-center gap-1.5 rounded-t-xl bg-[#21272d] pl-4">指示器<svg class="size-2.5 text-white"><use href="#tri-u"/></svg></button>
                </div>

                <div class="flex min-h-0 flex-1">
                    <div class="relative flex min-w-0 flex-1 flex-col bg-[#191c1f]">
                        <div class="flex h-12 shrink-0">
                            <div class="flex w-[156px] shrink-0 items-center gap-5 pl-[18px]">
                                <button aria-label="取消連結"><svg class="size-6"><use href="#t-unlink"/></svg></button>
                                <button aria-label="自動波紋"><svg class="h-6 w-[30px]"><use href="#t-link"/></svg></button>
                                <button aria-label="群組" class="text-[#4d535a]"><svg class="h-6 w-[26px]"><use href="#t-group"/></svg></button>
                            </div>
                            <div class="min-w-0 flex-1 overflow-hidden">
                                <div id="ruler" class="grid w-[1776px] grid-cols-11 text-[15px]/5 text-[#989da5]"></div>
                                <div class="mt-1 h-[3px] w-[807px] bg-[#ff6161]"></div>
                            </div>
                        </div>

                        <div class="flex">
                            <div class="relative min-w-0 flex-1">
                                <div class="h-[105px] bg-[#1e2427]"></div>
                                <div class="flex h-[105px] items-center bg-[#20272d]">
                                    <div class="w-[156px] pb-1.5 pl-[15px] text-[15px] text-[#8b9199]">
                                        <p class="pl-1">影片 2</p>
                                        <div class="mt-2.5 flex gap-[18px] stroke-2 text-[#d5d9df]">
                                            <button aria-label="鎖定"><svg class="size-4.5"><use href="#lock"/></svg></button>
                                            <button aria-label="靜音"><svg class="size-4.5"><use href="#speaker"/></svg></button>
                                            <button aria-label="顯示"><svg class="size-4.5"><use href="#eye"/></svg></button>
                                            <button aria-label="特效"><svg class="size-4.5"><use href="#wand"/></svg></button>
                                        </div>
                                    </div>
                                    <div class="relative flex h-[99px] w-[807px] rounded-lg border-3 border-[#eef4fa] bg-black p-0.5">
                                        <div class="flex flex-1 flex-col overflow-hidden rounded-md bg-[#7961c9]">
                                            <svg class="h-14 w-full shrink-0" viewBox="0 0 797 56" preserveAspectRatio="none"><g class="strip"></g></svg>
                                            <div class="mt-2 h-px bg-[#5a4a94]"></div>
                                            <div class="flex-1 bg-[#352b59]"></div>
                                        </div>
                                        <div class="absolute top-2 left-[9px] flex items-center gap-2 text-white/90">
                                            <svg class="size-6" viewBox="0 0 24 24"><rect x="1" y="1" width="22" height="22" rx="4" stroke="#a9adac" fill="#fff" fill-opacity=".5"/><path d="M5 18l4-6 3 3 3-5 4 8z" fill="#a9adac" stroke="none"/><circle cx="8" cy="7" r="2" fill="#a9adac" stroke="none"/></svg>
                                            <span class="text-shadow-[1px_1px_1px_#9a9e9d]">map-無路線</span>
                                            <svg class="ml-1 size-6" viewBox="0 0 24 24"><rect x="1" y="1" width="22" height="22" rx="4" stroke="#8e9291" fill="#fafafa"/><path d="M12 5l6 7-6 7-6-7z" fill="#8e9291" stroke="none"/></svg>
                                        </div>
                                        <svg class="absolute bottom-1.5 left-[66px] size-4.5 fill-white stroke-white"><use href="#dia"/></svg>
                                        <svg class="absolute right-[84px] bottom-1.5 size-4.5 fill-[#45dcc0] stroke-white"><use href="#dia"/></svg>
                                    </div>
                                </div>
                                <div class="flex h-[137px] items-center bg-[#1e2427]">
                                    <div class="w-[156px] pb-1.5 pl-[15px] text-[15px] text-[#8b9199]">
                                        <p class="pl-1">影片 1</p>
                                        <div class="mt-2.5 flex gap-[18px] stroke-2 text-[#d5d9df]">
                                            <button aria-label="鎖定"><svg class="size-4.5"><use href="#lock"/></svg></button>
                                            <button aria-label="取消靜音" class="text-[#55e5c5]"><svg class="size-4.5"><use href="#mute"/></svg></button>
                                            <button aria-label="顯示"><svg class="size-4.5"><use href="#eye"/></svg></button>
                                            <button aria-label="特效"><svg class="size-4.5"><use href="#wand"/></svg></button>
                                        </div>
                                    </div>
                                    <div class="relative h-[131px] w-[807px] overflow-hidden rounded-lg border border-[#6350ab] bg-[#7961c9]">
                                        <svg class="block h-20 w-full" viewBox="0 0 805 80" preserveAspectRatio="none"><g class="strip"></g></svg>
                                        <div class="absolute top-2.5 left-[11px] flex items-center gap-2 text-white/90">
                                            <svg class="size-6" viewBox="0 0 24 24"><rect x="1" y="1" width="22" height="22" rx="4" stroke="#a9adac" fill="#fff" fill-opacity=".5"/><path d="M5 18l4-6 3 3 3-5 4 8z" fill="#a9adac" stroke="none"/><circle cx="8" cy="7" r="2" fill="#a9adac" stroke="none"/></svg>
                                            <span class="text-shadow-[1px_1px_1px_#9a9e9d]">map-路線</span>
                                        </div>
                                    </div>
                                </div>
                                <div class="flex h-[67px] items-center bg-[#20272d]">
                                    <div class="w-[156px] pb-1.5 pl-[15px] text-[15px] text-[#8b9199]">
                                        <p class="pl-1">音訊 1</p>
                                        <div class="mt-2.5 flex gap-[18px] stroke-2 text-[#d5d9df]">
                                            <button aria-label="鎖定"><svg class="size-4.5"><use href="#lock"/></svg></button>
                                            <button aria-label="靜音"><svg class="size-4.5"><use href="#speaker"/></svg></button>
                                            <button aria-label="特效"><svg class="size-4.5"><use href="#wand"/></svg></button>
                                        </div>
                                    </div>
                                </div>
                                <div class="h-[68px] bg-[#1e2427]"></div>
                                <div class="pointer-events-none absolute inset-y-0 left-[156px] w-14 bg-linear-to-r from-[#191c1f]/50 to-transparent"></div>
                            </div>
                            <div class="w-[18px] pb-2"><div class="h-full rounded-full bg-[#373c41]"></div></div>
                        </div>

                        <div class="mt-auto flex items-center pb-0.5">
                            <button aria-label="新增軌道" class="w-[156px]"><svg class="mx-auto size-2.5" viewBox="0 0 10 10"><path d="M5 0v10M0 5h10" stroke-width="2"/></svg></button>
                            <div class="flex h-[18px] w-[1139px] items-center justify-between rounded-full bg-[#434a51]">
                                <span class="size-4 rounded-full border-2 border-[#7d868f] bg-[#566069]"></span>
                                <span class="size-4 rounded-full border-2 border-[#7d868f] bg-[#566069]"></span>
                            </div>
                        </div>

                        <!-- Playhead -->
                        <div class="pointer-events-none absolute inset-y-0 left-[850px] flex w-[34px] flex-col items-center">
                            <svg class="absolute top-0 h-[18px] w-5" viewBox="0 0 20 18"><path d="M1 0h18v8l-7 9H8L1 8z" fill="#ff6161" stroke="none"/></svg>
                            <div class="w-[3px] flex-1 bg-[#ff6161]"></div>
                            <span class="absolute top-[101px] flex h-[52px] w-[34px] items-center justify-center rounded-full bg-[#ff6161] text-white"><svg class="size-6"><use href="#t-cut"/></svg></span>
                        </div>
                    </div>

                    <!-- Level meter -->
                    <div class="flex w-[156px] shrink-0 flex-col bg-[#21272d] pt-2.5 pl-[23px]">
                        <div class="flex min-h-0 flex-1">
                            <svg id="meter" class="h-full w-[84px]" viewBox="0 0 84 550" preserveAspectRatio="none">
                                <defs><linearGradient id="lvl" x2="0" y2="1"><stop stop-color="#15181b"/><stop offset="1" stop-color="#0a1119"/></linearGradient></defs>
                                <g id="meter-ticks" stroke="#50565e"></g>
                                <path d="M1 4h27v545H1zM37 4h27v545H37z" fill="url(#lvl)" stroke="none"/>
                            </svg>
                            <div id="meter-labels" class="flex flex-col justify-between pl-[5px]"></div>
                        </div>
                        <div class="flex h-[30px] gap-[18px] pl-2 leading-5"><span>左</span><span>右</span></div>
                    </div>
                </div>
            </section>
        </div>

        <!-- Inspector -->
        <aside class="relative flex w-[526px] shrink-0 flex-col overflow-hidden rounded-t-xl bg-[#21272d] text-white">
            <nav class="flex h-15 shrink-0 items-end bg-linear-to-b from-[#14181b] to-[#0a1119] pl-[15px]">
                <button class="h-[54px] w-[90px] rounded-t-lg bg-[#21272d] text-[#55e5c5]">圖片</button>
                <button class="h-[54px] w-[126px]">顏色</button>
            </nav>
            <div class="mt-3 flex gap-3 pl-6">
                <button class="h-9 px-[22px]">基礎</button>
                <button class="h-9 rounded-full bg-[#353c44] px-[22px] text-[#55e5c5]">遮罩</button>
                <button class="h-9 px-[22px]">AI 工具</button>
                <button class="h-9 px-[22px]">動畫</button>
                <button class="h-9 px-5 text-[#4a5057]">A</button>
            </div>
            <div class="mt-6 grid grid-cols-[repeat(5,81px)] gap-x-[9px] gap-y-3 pl-6 text-[#c3c8d0]">
                <button aria-label="匯入遮罩" class="flex h-[81px] items-center justify-center rounded-lg bg-[#2d333a]"><svg class="size-12"><use href="#m-import"/></svg></button>
                <button aria-label="無" class="flex h-[81px] items-center justify-center rounded-lg bg-[#2d333a]"><svg class="size-12"><use href="#m-none"/></svg></button>
                <button aria-label="鋼筆" class="flex h-[81px] items-center justify-center rounded-lg bg-[#181b1e] text-[#55e5c5]"><svg class="size-11"><use href="#m-pen"/></svg></button>
                <button aria-label="畫筆" class="relative flex h-[81px] items-center justify-center rounded-lg bg-[#181b1e] text-[#55e5c5]"><svg class="size-12"><use href="#m-brush"/></svg><span class="absolute -top-3 right-0 h-6 w-12 rounded-l-full rounded-tr-lg bg-linear-[120deg,#ff9a6c,#f944f0] text-center text-[13px]/6 font-bold text-white italic">BETA</span></button>
                <button aria-label="矩形" class="flex h-[81px] items-center justify-center rounded-lg bg-[#181b1e]"><svg class="size-12"><use href="#m-rect"/></svg></button>
                <button aria-label="橢圓" class="flex h-[81px] items-center justify-center rounded-lg bg-[#181b1e]"><svg class="h-12 w-13"><use href="#m-oval"/></svg></button>
                <button aria-label="雙線" class="flex h-[81px] items-center justify-center rounded-lg bg-[#181b1e]"><svg class="size-12"><use href="#m-two"/></svg></button>
                <button aria-label="單線" class="flex h-[81px] items-center justify-center rounded-lg border-2 border-[#55e5c5] bg-[#181b1e]"><svg class="size-12"><use href="#m-one"/></svg></button>
                <button aria-label="愛心" class="flex h-[81px] items-center justify-center rounded-lg bg-[#181b1e]"><svg class="size-12"><use href="#m-heart"/></svg></button>
                <button aria-label="星形" class="flex h-[81px] items-center justify-center rounded-lg bg-[#181b1e]"><svg class="size-12"><use href="#m-star"/></svg></button>
            </div>
            <h3 class="mt-[11px] pl-6">自訂</h3>
            <button aria-label="自訂遮罩" class="relative mt-[13px] ml-6 flex h-[81px] w-[81px] shrink-0 items-center justify-center rounded-lg bg-[#181b1e] text-[#c3c8d0]">
                <svg class="h-12 w-13"><use href="#m-oval"/></svg>
                <span class="absolute top-2.5 right-2.5 flex size-[30px] items-center justify-center rounded-full bg-[#111416]/80 text-white"><svg class="size-[22px]" viewBox="0 0 22 22"><path d="M5 17a4 4 0 0 1 0-9 6 6 0 0 1 12 0 4 4 0 0 1 0 9M11 19v-8M8 13.500l3-3 3 3" stroke-width="2"/></svg></span>
            </button>

            <div class="mt-9 flex h-15 shrink-0 items-center bg-[#2e343b] pr-[46px] pl-6">
                <input id="transform" type="checkbox" role="switch" checked class="flex h-[22px] w-9 appearance-none items-center justify-end rounded-full border-2 border-[#55e5c5] px-0.5 before:size-3 before:rounded-full before:bg-[#55e5c5] before:content-['']">
                <label for="transform" class="ml-3 font-bold">形變</label>
                <button aria-label="重設形變" class="ml-auto text-[#c3c8d0]"><svg class="size-[22px]"><use href="#reset"/></svg></button>
                <button aria-label="上一個關鍵幀" class="ml-6 text-[#8b9199]"><svg class="size-2.5"><use href="#tri-l"/></svg></button>
                <button aria-label="加入形變關鍵幀" class="ml-2 text-[#c3c8d0]"><svg class="size-5"><use href="#dia"/></svg></button>
            </div>

            <div class="px-6">
                <div class="mt-[30px] flex items-center pr-[22px]">
                    <label for="rotate">旋轉</label>
                    <button aria-label="上一個關鍵幀" class="ml-auto text-[#8b9199]"><svg class="size-2.5"><use href="#tri-l"/></svg></button>
                    <button aria-label="加入旋轉關鍵幀" class="ml-2 text-[#c3c8d0]"><svg class="size-5"><use href="#dia"/></svg></button>
                </div>
                <div class="mt-3 flex items-center">
                    <svg class="size-9 shrink-0" viewBox="0 0 36 36" stroke="none"><circle cx="18" cy="18" r="17.500" fill="#989da5"/><circle cx="18" cy="9.500" r="6" fill="#eef4fc"/></svg>
                    <input id="rotate" value="0.00°" class="ml-6 h-9 w-full rounded-lg bg-[#171b1e] px-3.5 text-[#c3c8d0] outline-none">
                </div>

                <div class="mt-9 flex items-center pr-[22px]">
                    <span>位置</span>
                    <button aria-label="重設位置" class="ml-auto text-[#c3c8d0]"><svg class="size-[22px]"><use href="#reset"/></svg></button>
                    <button aria-label="上一個關鍵幀" class="ml-6 text-[#8b9199]"><svg class="size-2.5"><use href="#tri-l"/></svg></button>
                    <button aria-label="移除位置關鍵幀" class="ml-2 text-[#55e5c5]"><svg class="size-5 fill-current"><use href="#dia"/></svg></button>
                </div>
                <div class="mt-3 flex items-center text-[#8b9199]">
                    <label for="pos-x" class="w-6">X</label>
                    <div class="flex h-9 flex-1 items-center rounded-lg bg-[#171b1e] pr-1.5 pl-[15px]"><input id="pos-x" value="508.29" class="w-full min-w-0 bg-transparent text-[#c3c8d0] outline-none">px</div>
                    <label for="pos-y" class="ml-6 w-6">Y</label>
                    <div class="flex h-9 flex-1 items-center rounded-lg bg-[#171b1e] pr-1.5 pl-[15px]"><input id="pos-y" value="-307.07" class="w-full min-w-0 bg-transparent text-[#c3c8d0] outline-none">px</div>
                </div>

                <div class="mt-9 flex items-center pr-[22px]">
                    <label for="feather">羽化</label>
                    <button aria-label="上一個關鍵幀" class="ml-auto text-[#8b9199]"><svg class="size-2.5"><use href="#tri-l"/></svg></button>
                    <button aria-label="加入羽化關鍵幀" class="ml-2 text-[#c3c8d0]"><svg class="size-5"><use href="#dia"/></svg></button>
                </div>
                <div class="mt-3 flex items-center pl-[3px] text-[#8b9199]">
                    <input id="feather" type="range" value="0" class="h-1.5 flex-1 appearance-none rounded-full bg-[#383e47] [&::-webkit-slider-thumb]:size-[19px] [&::-webkit-slider-thumb]:appearance-none [&::-webkit-slider-thumb]:rounded-full [&::-webkit-slider-thumb]:border-3 [&::-webkit-slider-thumb]:border-[#c3c8d0] [&::-webkit-slider-thumb]:bg-[#555b62]">
                    <div class="ml-7 flex h-9 w-[107px] items-center rounded-lg bg-[#171b1e] pr-1.5 pl-3.5"><input aria-label="羽化百分比" value="0.00" class="w-full min-w-0 bg-transparent text-[#c3c8d0] outline-none">%</div>
                </div>

                <div class="mt-9 flex items-center justify-between">
                    <label for="invert">反轉遮罩</label>
                    <input id="invert" type="checkbox" role="switch" class="flex h-[22px] w-9 appearance-none items-center rounded-full border-2 border-[#c3c8d0] px-0.5 before:size-3 before:rounded-full before:bg-[#c3c8d0] before:content-['']">
                </div>
            </div>

            <div class="mt-auto flex justify-between px-6 pb-[23px]">
                <button class="h-9 rounded-lg bg-[#353b42] px-2.5 font-medium text-[#d0d4da]">重設</button>
                <button class="h-9 rounded-lg bg-[#55e5c5] px-2.5 font-medium text-[#1c3a3a]">儲存為自訂</button>
            </div>

            <svg class="pointer-events-none absolute top-[574px] left-[280px] h-24 w-[180px] text-[#55e5c5]" viewBox="0 0 180 96"><path d="M9 9l140 69" stroke-width="7" stroke-linecap="round"/><path d="M172 87l-20-22-3 13-7 8z" fill="currentColor" stroke="none"/></svg>
        </aside>
    </main>

    <script>
        const NS = 'http://www.w3.org/2000/svg';

        function el(parent, name, attrs, text) {
            const node = document.createElementNS(NS, name);
            for (const key in attrs) node.setAttribute(key, attrs[key]);
            if (text) node.textContent = text;
            parent.appendChild(node);
            return node;
        }

        // Map data: each string is a list of x,y points on a 1568 x 1568 grid
        const green = [
            '0,130 40,100 20,60 80,90 130,60 180,20 200,0 420,0 430,60 400,110 410,180 370,240 290,320 230,350 190,380 150,430 90,450 60,400 80,360 110,320 90,270 40,300 0,250',
            '140,430 180,420 260,400 300,360 370,350 380,400 370,430 420,500 400,550 430,590 410,640 390,690 350,730 330,800 300,860 240,920 200,990 150,1040 100,1060 20,1050 20,960 60,860 40,800 0,780 0,700 60,700 80,660 60,640 110,610 140,560 100,510 110,470',
            '400,1150 480,1100 530,1050 600,970 640,890 720,860 760,790 820,700 870,720 930,690 950,760 960,800 1030,830 1030,950 980,1000 990,1050 1060,1080 1060,1150 1120,1130 1160,1180 1210,1180 1240,1130 1340,1110 1260,1030 1250,900 1290,870 1400,820 1480,730 1500,500 1568,500 1568,1568 165,1568 210,1400 300,1360 310,1280 360,1200',
            '1380,320 1420,270 1380,230 1400,190 1440,200 1450,110 1500,60 1520,0 1568,0 1568,520 1500,510 1440,440 1400,420',
            '1410,520 1500,520 1490,700 1450,760 1400,760 1440,680 1400,620',
            '1250,400 1300,350 1310,400 1340,440 1290,455', '0,1390 60,1370 120,1400 160,1440 130,1500 60,1520 0,1568'
        ];
        const white = [
            '640,880 690,860 710,900 690,935 670,925', '890,1130 960,1090 1000,1110 960,1180 940,1250 910,1240 900,1170', '940,1400 980,1390 970,1450 930,1450',
            '780,1020 850,970 865,1000 810,1080 780,1070', '1000,1150 1040,1150 1030,1200 1000,1200', '830,730 850,750 840,800 825,770', '1260,1330 1300,1330 1290,1370 1265,1365',
            '780,1200 830,1160 850,1180 800,1290 740,1330', '260,140 300,140 310,180 285,200 265,170', '170,60 210,90 190,120', '1430,160 1440,110 1470,150', '1500,1030 1530,1080 1500,1110',
            '310,1400 380,1390 430,1440 380,1460', '1350,700 1400,690 1400,740 1350,800 1310,790', '280,380 330,380 350,420 300,420'
        ];
        const cream = [
            '575,460 600,450 585,600 575,750 540,860 500,910 330,915 300,900 480,880 540,760 552,550', '860,60 880,20 960,0 900,60 890,150 870,150',
            '870,200 890,300 940,310 1000,230 1060,240 1110,370 1150,430 1155,520 1140,650 1090,760 1130,900 1165,1010 1110,930 1060,800 1070,700 1125,600 1135,480 1095,400 1060,290 1010,270 960,370 900,430 870,360',
            '180,1090 230,1160 330,1190 350,1260 290,1330 230,1260 190,1200 130,1160', '1000,1040 1070,1060 1060,1110 1010,1110', '0,0 150,0 130,60 80,90 20,50',
            '400,90 470,60 460,110 410,140', '280,1400 200,1420 150,1568 180,1568', '0,1110 60,1080 60,1180 20,1200', '610,260 630,260 620,340 600,380', '960,200 990,200 980,250 965,260',
            '1110,70 1160,60 1170,100 1120,100', '1350,620 1400,640 1380,720 1340,690', '720,240 750,250 740,280', '1400,440 1440,480 1400,560', '330,740 400,740 390,790 330,800', '1110,0 1150,0 1140,30'
        ];
        const minor = [
            '960,20 1400,40', '980,60 1330,70', '1000,110 1300,120', '1030,150 1250,155', '1060,190 1250,195', '1080,230 1220,225', '1090,0 1110,240', '1120,0 1125,300', '1200,0 1205,250', '1225,0 1225,260', '1280,20 1270,300', '1145,0 1150,330',
            '1300,60 1300,200', '900,40 1010,60', '910,90 990,220', '640,170 860,400', '620,250 820,480', '640,330 840,560', '600,410 780,620', '600,500 760,700', '590,640 700,760', '640,460 830,430', '660,540 840,500', '700,640 850,560', '720,100 680,300',
            '800,200 740,450', '820,300 780,520', '760,160 860,230', '640,620 700,560 760,520', '650,720 720,640 800,620', '600,760 700,700 760,640', '620,840 700,760', '900,440 1020,470', '880,520 1010,560', '920,420 960,600', '960,380 1000,560',
            '1000,300 1010,480', '1050,360 1060,560', '1080,420 1070,640', '980,620 1100,600', '960,560 1120,520', '900,640 1040,700', '960,460 1100,430', '1150,480 1190,470 1240,420', '1200,560 1300,500 1330,450', '1180,640 1260,600 1340,590',
            '1200,720 1220,880', '1140,740 1170,900', '1110,790 1220,770', '1110,850 1230,830', '1150,940 1220,900', '1240,730 1270,800', '430,180 540,340 560,460', '460,220 440,330 500,470', '420,260 570,300', '420,320 560,380', '440,380 550,430',
            '500,170 520,300', '540,140 560,250', '470,440 550,520', '490,560 550,620', '430,640 540,660', '420,700 540,720', '390,770 520,790', '360,820 500,830', '310,860 470,860', '340,960 350,1060', '300,980 290,1060', '230,1020 380,1060',
            '200,1080 240,1240', '160,1120 210,1250', '120,1180 240,1180', '100,1240 220,1220', '240,1160 380,1180', '260,1100 380,1100', '440,930 540,960', '430,980 560,990', '420,1030 500,1040', '480,940 500,1030', '540,900 600,900', '560,820 640,760',
            '20,560 60,520 140,500', '0,600 40,640 110,600', '110,620 160,640 180,700 240,690', '700,920 760,900 850,930', '900,860 940,960', '850,1180 830,1300', '1000,1280 1040,1200 1100,1150', '1360,880 1370,840 1410,850 1420,900 1470,940 1400,900',
            '1350,380 1380,340 1420,370 1410,420', '980,1470 1060,1440 1130,1450', '660,1180 650,1290 700,1330', '300,1250 260,1310 200,1310', '230,70 300,110 380,180 420,170', '170,0 160,130 120,260', '1250,1290 1300,1270 1320,1320', '720,60 780,130 850,170', '610,60 660,120'
        ];
        const roads = [
            '0,505 60,506 125,515 150,490 170,440 190,415 260,410 290,370 300,335 395,275 440,210 480,150 580,110 670,75 720,20 740,0', '120,500 140,480 155,420 175,385 250,370 290,330',
            '390,290 420,390 480,500 530,575 640,600', '480,150 440,125 415,140 410,180', '520,0 500,60 470,130', '590,0 592,240 630,300 650,400 655,560', '700,0 720,100 750,240 780,330', '820,75 790,120 750,240 700,350 690,430',
            '820,78 890,80 970,85 990,40 1000,0', '1020,0 1020,80 1040,220 1040,300 1030,400 1000,500 985,560 1010,620 1050,720 1050,760', '1060,0 1060,130 1110,230 1145,340 1170,430 1185,560 1190,700 1190,800', '1170,0 1168,240 1130,250',
            '1245,245 1200,330 1140,410', '1330,20 1310,100', '1380,130 1430,290 1435,380 1430,450', '1430,460 1380,560 1380,640', '1250,315 1270,350 1300,350 1340,400 1420,460 1510,490 1568,500',
            '1090,975 1040,975 1020,1020 940,1090 900,1110 850,1140 800,1220 750,1285 710,1310 680,1360 620,1430 570,1445 510,1475 490,1460 470,1400 430,1425 380,1380 300,1320 260,1340 220,1395 190,1380 170,1420 155,1500 135,1568',
            '0,1340 60,1320 90,1290 120,1240 160,1170 220,1130 300,1130 410,1140 390,1190 320,1240 300,1320', '90,1290 50,1200 45,1100 60,1060 120,1070 180,1010 280,880 400,770 440,772', '400,740 450,680 490,600 520,625 530,560', '80,1290 150,1285 180,1330 190,1380',
            '700,400 760,440 850,465 852,600 830,650', '860,600 900,600 1000,605', '540,580 640,600 690,540 690,440', '590,545 600,540 610,460 630,420 690,425', '640,610 590,720 570,860 560,950 530,1030', '600,590 575,750', '845,250 780,330', '860,380 840,200', '890,70 870,170 880,300 910,320 960,290 1010,230 1040,225',
            '1050,720 1030,850 1040,970', '1070,820 1060,900 1090,970', '1190,800 1205,860 1160,1040', '1170,1045 1200,1110 1240,1120 1260,1105 1340,1100 1370,1065 1350,1110 1370,1140 1420,1125 1470,1140 1500,1110 1568,1080', '1190,690 1250,690 1350,650 1380,620 1400,630',
            '0,1140 40,1140 45,1110', '1220,1130 1225,1260 1215,1360 1240,1390 1215,1400 1230,1450 1225,1568', '65,0 70,80 40,200 25,300 0,400', '545,170 560,200 540,320 530,560 480,690 400,760', '530,1030 490,990 570,940', '900,1110 880,1080 910,1070 920,1090', '535,0 520,60', '610,0 640,100 670,160 665,280 700,350'
        ];
        const highways = [
            '410,1140 460,1060 530,1030 580,970 600,890 640,840 700,830 750,780 800,690 845,660 880,690 930,770 980,800 1040,805 1070,870 1110,940 1130,1020 1165,1045 1190,1035 1230,960 1270,860 1310,810 1380,820 1430,800 1480,730 1510,600 1520,480 1530,380 1568,300',
            '1150,10 1420,15', '200,1130 300,1130 410,1140'
        ];
        const streams = [
            '80,20 100,90 60,130', '150,60 150,180 100,260', '240,0 220,70 190,130 200,180', '250,90 230,150', '290,100 330,110 320,160', '110,140 60,230', '250,250 230,330 280,350', '220,240 270,250', '30,420 80,340', '190,190 240,200 300,180',
            '350,170 410,175 560,180 540,190', '270,420 290,480 270,520', '200,430 150,480 150,500', '280,430 320,420', '0,540 40,600 30,660', '50,650 80,680 170,680 200,650', '230,460 250,520', '30,840 100,880 140,870 170,830', '130,880 170,920', '220,860 240,920 200,960', '270,740 300,800', '170,760 250,770 280,850',
            '400,1130 400,1030 370,940 375,920', '330,990 340,930 400,925', '310,1250 350,1180 365,1140', '300,1330 310,1270 350,1200', '170,1350 150,1440 155,1500', '200,1340 240,1380 270,1310', '130,1568 150,1490', '410,1150 430,1220 480,1245 560,1250 620,1240', '480,1100 530,1190 530,1120', '520,1190 560,1200',
            '630,1000 600,1060 630,1150 640,1200', '790,830 800,850 785,870', '820,1050 860,1100', '880,1050 900,1090', '950,930 970,1010', '930,1090 930,1150 900,1250 860,1320', '690,1350 740,1400 820,1480 840,1470', '820,1290 890,1350 910,1480', '720,1420 680,1500 700,1568', '620,1430 600,1500', '470,1400 540,1400',
            '510,1480 540,1568', '430,1560 480,1510', '1120,1060 1070,1140 1060,1160', '1170,1110 1120,1180', '1260,1120 1260,1200', '1290,1290 1340,1350 1420,1350', '1250,1390 1340,1400 1360,1440', '1300,1180 1270,1260 1300,1290', '1430,1410 1470,1450 1500,1420', '1400,1370 1440,1430 1440,1520', '1440,1480 1480,1490',
            '1470,1190 1500,1140 1568,1120', '1500,1260 1490,1200', '1200,1500 1260,1480 1340,1490', '1250,1568 1280,1500', '1330,870 1360,960 1400,930', '1290,900 1370,950', '1400,940 1430,990', '1440,940 1520,950', '1530,1000 1568,960', '1380,780 1380,680 1390,600 1430,520', '1280,820 1300,770 1380,740', '1170,740 1180,700 1200,680 1240,700 1250,740',
            '1430,500 1400,570', '1510,230 1480,270 1500,300', '1540,180 1568,220', '1520,240 1568,250', '1568,340 1540,420', '1500,200 1460,300', '610,220 640,200', '570,270 590,230 590,180', '520,660 530,560', '500,870 510,830 540,820', '560,760 570,730', '270,1400 300,1430 280,1500', '370,1460 350,1568', '740,1568 750,1520 780,1480'
        ];
        const borders = ['330,90 340,180 370,240 400,310', '290,380 330,440 330,540 290,590 240,600 240,700 180,790 60,810 0,780', '1250,920 1300,950 1330,970 1440,970 1480,1000 1568,990', '1568,340 1530,350 1530,480', '320,0 340,90'];
        const waterShapes = [
            '755,0 740,20 700,60 670,110 650,150 625,220 605,280 580,370 565,440 556,520 557,600 550,680 535,750 518,790 505,830 490,870 470,910 440,920 320,916 325,922 440,926 475,920 505,870 525,830 545,780 560,720 565,650 566,560 572,470 582,420 602,350 624,270 642,220 667,150 695,110 725,75 770,45 830,25 820,0',
            '300,940 285,950 240,995 200,1035 150,1065 110,1105 80,1150 55,1190 35,1240 20,1290 0,1350 0,1385 20,1340 40,1290 60,1240 85,1195 110,1150 150,1100 200,1075 230,1040 260,990 300,960',
            '825,0 838,40 842,80 842,140 862,190 864,260 866,320 880,385 900,418 925,418 945,392 970,335 992,272 1020,264 1050,272 1078,330 1098,380 1115,400 1110,380 1085,320 1060,262 1040,250 1000,245 975,285 950,340 925,378 895,382 880,340 874,260 878,190 860,150 850,90 852,40 880,0',
            '1185,1568 1200,1515 1222,1568', '1540,1568 1540,1530 1555,1460 1568,1450 1568,1568', '525,820 540,810 538,860 525,870'
        ];
        const waterLines = [
            '1110,395 1135,415 1145,470 1135,520 1130,600 1120,650 1080,700 1068,760 1085,830 1115,900 1150,960 1158,1050 1165,1125 1200,1130 1215,1180 1215,1240 1195,1310 1170,1310 1165,1220 1150,1195 1115,1190 1095,1220 1105,1270 1125,1330 1130,1420 1145,1480 1150,1568'
        ];
        const path = ['215,1228 232,1224 245,1203 250,1140 258,1130 266,1074 330,1066 345,1022 364,1022 371,1000 380,1024 400,1024 412,985 430,965 490,925 530,865 553,830 570,775 577,785 593,725 610,680 640,610 650,560 665,480 689,437 707,400 780,332 797,370 830,410 848,464 868,464 903,499 921,497 942,545 950,585 965,608 1055,628 1075,642 1103,648 1170,690 1168,735 1172,750 1185,755'];

        const toMap = (s) => s.split(' ').map((p) => {
            const [x, y] = p.split(',').map(Number);
            return [Math.round(x * 9930 / 1568) / 10, Math.round(y * 5330 / 1568) / 10];
        });
        // Curve through the middle of every leg, so bends come out round
        function smooth(s) {
            const pts = toMap(s);
            let d = `M${pts[0]}`;
            for (let i = 1; i < pts.length - 1; i++) {
                const [x, y] = pts[i];
                d += `Q${x} ${y} ${(x + pts[i + 1][0]) / 2} ${(y + pts[i + 1][1]) / 2}`;
            }
            return d + `L${pts[pts.length - 1]}`;
        }
        const sharp = (s) => 'M' + toMap(s).join('L');
        const map = document.getElementById('map');
        el(map, 'path', { d: 'M0 0h993v533H0z', fill: '#fbfbfb', stroke: 'none' });
        const area = (list, fill) => el(map, 'path', { d: list.map((s) => smooth(s) + 'z').join(''), fill, stroke: 'none' });
        const line = (list, stroke, width, dash) => el(map, 'path', { d: list.map(smooth).join(''), fill: 'none', stroke, 'stroke-width': width, 'stroke-dasharray': dash || 'none', 'stroke-linejoin': 'round' });
        area(cream, '#fdf7ec');
        area(green, '#e4f9ec');
        area(white, '#fafafa');
        line(borders, '#ccd3ce', 1, '2 3');
        line(minor, '#ededed', 1.5);
        line(streams, '#bccff6', 1.3);
        area(waterShapes, '#b9cbf5');
        line(waterLines, '#b9cbf5', 5);
        line(roads, '#d9d9d9', 2.6);
        line(highways, '#d6d6d6', 4);

        // The small route keeps the line visible in thumbnails
        const drawRoute = (id, width) => el(document.getElementById(id), 'path', { d: path.map(sharp).join(''), fill: 'none', stroke: '#4a88f7', 'stroke-width': width, 'stroke-linejoin': 'round' });
        drawRoute('route', 3.5);
        drawRoute('route-small', 7);

        // Place names: text, x, y, size, rotation
        const places = [
            ['臺北', 848, 46, 17], ['大安區', 764, 78, 13], ['新莊區', 280, 71, 13], ['龜山區', 81, 100, 13], ['板橋區', 450, 135, 13],
            ['中和區', 540, 200, 13], ['文山區', 827, 232, 13], ['新店區', 748, 276, 13], ['三峽區', 115, 456, 13],
            ['萬華區', 585, 71, 9], ['永和區', 652, 139, 9], ['土城區', 358, 317, 9], ['樹林區', 288, 261, 9], ['信義區', 873, 10, 9],
            ['五守新村', 419, 18, 8], ['江子翠', 475, 38, 8], ['東門', 705, 19, 8], ['博愛特區', 645, 33, 8], ['中正區', 673, 8, 9], ['丹鳳', 291, 49, 8],
            ['後港', 299, 98, 8], ['西盛', 321, 107, 8], ['埔墘', 514, 102, 8], ['社後', 427, 111, 8], ['SHIDA', 700, 85, 8],
            ['六張犁', 827, 105, 8], ['公館', 719, 118, 8], ['溪頭', 918, 122, 8], ['東舊路坑', 64, 117, 8], ['後埔', 447, 164, 8],
            ['13鄰', 477, 163, 8], ['樹林太順', 283, 169, 8], ['工業區', 283, 178, 8], ['潭底', 284, 192, 8], ['樹林', 295, 215, 8], ['景美', 757, 207, 8],
            ['木柵', 869, 217, 8], ['兔仔坑', 46, 212, 8], ['迴龍', 250, 98, 8], ['嶺頂', 68, 169, 8], ['草地尾', 975, 164, 8], ['軍功埔', 937, 170, 8],
            ['石門', 431, 349, 8], ['綠野香坡', 502, 351, 8], ['安坑', 626, 354, 8], ['頭城', 564, 382, 8], ['三城', 528, 394, 8], ['雙城', 516, 412, 8],
            ['五城', 495, 429, 8], ['建安', 385, 486, 8], ['九層', 319, 499, 8], ['竹崙', 316, 513, 8], ['麻園', 70, 523, 8], ['橫溪', 189, 449, 8],
            ['坪林', 238, 461, 8], ['柑園', 188, 362, 8], ['桃子腳', 166, 410, 8], ['三峽鎮', 62, 415, 8], ['大台北華城', 630, 499, 8], ['安坑', 458, 524, 8],
            ['灣潭', 756, 425, 8], ['直潭', 716, 422, 8], ['四十份', 933, 461, 8], ['十四分', 843, 530, 8], ['屈尺', 771, 502, 8], ['大崎腳', 823, 374, 8], ['青潭', 787, 378, 8],
            ['土城工業區', 313, 330, 8], ['頂埔', 265, 361, 8], ['媽祖田', 246, 390, 8], ['永寧工業區', 481, 268, 8], ['清水', 440, 251, 8], ['十四張', 703, 266, 8],
            ['中央新村', 698, 278, 8], ['七張', 757, 294, 8], ['中湖', 13, 289, 8], ['山佳', 193, 301, 8], ['家美工業區', 586, 185, 8], ['積穗', 517, 153, 8], ['坪林', 769, 258, 8], ['貓空', 941, 212, 8],
            ['桃園市', 187, 30, 9, 25], ['桃園市', 207, 172, 9, -75], ['新北市', 232, 182, 9, -70], ['新店溪', 720, 320, 8, 65], ['新北市', 708, 192, 9, 88], ['台北市', 731, 192, 9, 88], ['新北市', 540, 78, 9, 80], ['台北市', 555, 72, 9, 80], ['台北市', 974, 278, 9, 70]
        ];
        const layer = document.getElementById('places');
        for (const [name, x, y, size, rot] of places) {
            el(layer, 'text', { x, y, 'font-size': size, transform: `rotate(${rot || 0} ${x} ${y})` }, name);
        }

        // Frames of the two clips: frame width, height, with route
        const frames = [[115, 56, false], [148, 80, true]];
        document.querySelectorAll('.strip').forEach((strip, i) => {
            const [w, h, route] = frames[i];
            for (let x = 0, n = 0; x < 807; x += w, n++) {
                el(strip, 'use', { href: '#map', x, width: w, height: h });
                if (route) el(strip, 'use', { href: '#route-small', x, width: w, height: h });
                if (n % 2) el(strip, 'path', { d: `M${x} 0v${h}`, stroke: '#b9b3da', 'stroke-width': 1 });
            }
        });

        // Time ruler, one cell per second
        const ruler = document.getElementById('ruler');
        for (let s = 0; s < 11; s++) {
            const time = '00:00:' + String(s).padStart(2, '0') + ':00';
            ruler.innerHTML += `<div><p class="mt-1 mb-[5px]">${time}</p>
                <div class="grid h-3 grid-cols-5 items-end">
                    <i class="h-3 border-l border-[#989da5]"></i>
                    <i class="h-1.5 border-l border-[#989da5]"></i>
                    <i class="h-1.5 border-l border-[#989da5]"></i>
                    <i class="h-1.5 border-l border-[#989da5]"></i>
                    <i class="h-1.5 border-l border-[#989da5]"></i>
                </div></div>`;
        }

        // Meter scale
        const ticks = document.getElementById('meter-ticks');
        const labels = document.getElementById('meter-labels');
        for (let i = 0; i <= 50; i++) {
            const y = i * 11 + (i === 0 ? 1 : 0);
            el(ticks, 'path', { d: i % 5 ? `M71 ${y}h6` : `M0 ${y}h83` });
        }
        el(ticks, 'path', { d: 'M72 0v550M0 549h84', 'stroke-width': 2.5 });
        for (let i = 0; i <= 10; i++) {
            const text = i === 0 ? '0' : i === 10 ? 'dB' : -6 * i;
            labels.innerHTML += `<span class="flex h-0 items-center">${text}</span>`;
        }
    </script>
</body>
</html>
